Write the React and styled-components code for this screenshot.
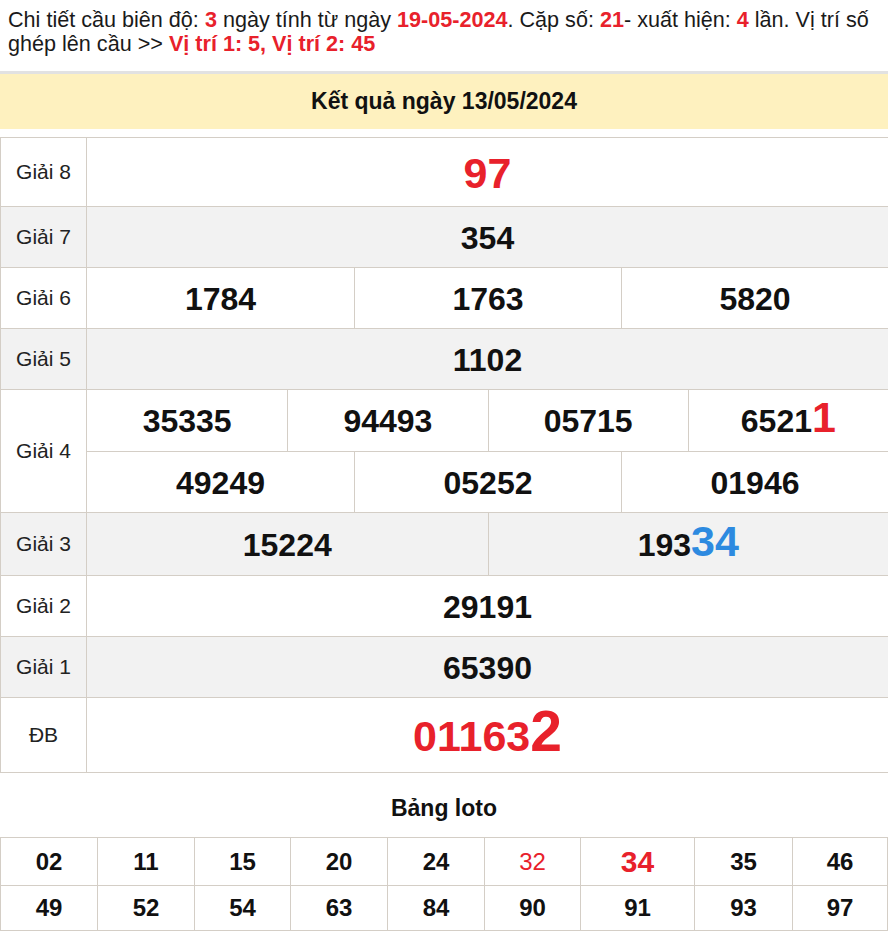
import styled, { createGlobalStyle } from "styled-components";

const GlobalStyle = createGlobalStyle`
  *, *::before, *::after {
    box-sizing: border-box;
  }
  html, body {
    margin: 0;
    padding: 0;
    background: #fff;
    font-family: "Liberation Sans", Arial, sans-serif;
    color: #111;
  }
`;

const RED = "#e8212b";
const BLUE = "#2d8ae0";
const LINE = "#d4cec6";

const prizes = [
  { label: "Giải 8", h: 69, rows: [[{ v: "97", red: true, big: true }]] },
  { label: "Giải 7", h: 61, alt: true, rows: [[{ v: "354" }]] },
  { label: "Giải 6", h: 61, rows: [[{ v: "1784" }, { v: "1763" }, { v: "5820" }]] },
  { label: "Giải 5", h: 61, alt: true, rows: [[{ v: "1102" }]] },
  {
    label: "Giải 4",
    h: 123,
    rows: [
      [{ v: "35335" }, { v: "94493" }, { v: "05715" }, { v: "6521", tail: "1", tailColor: RED }],
      [{ v: "49249" }, { v: "05252" }, { v: "01946" }],
    ],
  },
  { label: "Giải 3", h: 63, alt: true, rows: [[{ v: "15224" }, { v: "193", tail: "34", tailColor: BLUE }]] },
  { label: "Giải 2", h: 61, rows: [[{ v: "29191" }]] },
  { label: "Giải 1", h: 61, alt: true, rows: [[{ v: "65390" }]] },
  { label: "ĐB", h: 75, rows: [[{ v: "01163", red: true, big: true, tail: "2", tailColor: RED, tailHuge: true }]] },
];

const loto = [
  ["02", "11", "15", "20", "24", "32", "34", "35", "46"],
  ["49", "52", "54", "63", "84", "90", "91", "93", "97"],
];

export default function App() {
  return (
    <Page>
      <GlobalStyle />
      <Intro>
        Chi tiết cầu biên độ: <Hot>3</Hot> ngày tính từ ngày <Hot>19-05-2024</Hot>. Cặp số:{" "}
        <Hot>21</Hot>- xuất hiện: <Hot>4</Hot> lần. Vị trí số ghép lên cầu &gt;&gt;{" "}
        <Hot>Vị trí 1: 5, Vị trí 2: 45</Hot>
      </Intro>

      <Banner>Kết quả ngày 13/05/2024</Banner>

      <Results>
        {prizes.map((p) => (
          <PrizeRow key={p.label} $alt={p.alt} $h={p.h}>
            <Label>{p.label}</Label>
            <Values>
              {p.rows.map((row, i) => (
                <NumberLine key={i} $cols={row.length}>
                  {row.map((n, j) => (
                    <NumberCell key={j}>
                      <Digits $red={n.red} $big={n.big}>
                        {n.v}
                        {n.tail && (
                          <Tail $color={n.tailColor} $huge={n.tailHuge}>
                            {n.tail}
                          </Tail>
                        )}
                      </Digits>
                    </NumberCell>
                  ))}
                </NumberLine>
              ))}
            </Values>
          </PrizeRow>
        ))}
      </Results>

      <LotoTitle>Bảng loto</LotoTitle>

      <Loto>
        {loto.map((row, i) =>
          row.map((n, j) => (
            <LotoCell
              key={`${i}-${j}`}
              $h={i === 0 ? 48 : 45}
              $red={n === "32" || n === "34"}
              $big={n === "34"}
              $light={n === "32"}
            >
              {n}
            </LotoCell>
          ))
        )}
      </Loto>
    </Page>
  );
}

const Page = styled.div`
  width: 888px;
  overflow: hidden;
`;

const Intro = styled.p`
  margin: 0;
  height: 56px;
  padding: 8px 8px 0;
  font-size: 21.6px;
  line-height: 24px;
  color: #1a1a1a;
`;

const Hot = styled.b`
  color: ${RED};
`;

const Banner = styled.div`
  margin-top: 15px;
  border-top: 3px solid #e2e2e2;
  height: 58px;
  background: #fef1bf;
  display: flex;
  align-items: center;
  justify-content: center;
  font-size: 23px;
  font-weight: bold;
  color: #111;
`;

const Results = styled.div`
  margin-top: 8px;
  border-top: 1px solid ${LINE};
  border-left: 1px solid ${LINE};
`;

const PrizeRow = styled.div`
  display: grid;
  grid-template-columns: 86px 1fr;
  height: ${(p) => p.$h}px;
  background: ${(p) => (p.$alt ? "#f2f2f2" : "#fff")};
  border-bottom: 1px solid ${LINE};
`;

const Label = styled.div`
  display: flex;
  align-items: center;
  justify-content: center;
  border-right: 1px solid ${LINE};
  font-size: 21px;
  color: #222;
`;

const Values = styled.div`
  display: flex;
  flex-direction: column;

  & > * + * {
    border-top: 1px solid ${LINE};
  }
`;

const NumberLine = styled.div`
  flex: 1;
  display: grid;
  grid-template-columns: repeat(${(p) => p.$cols}, 1fr);

  & > * + * {
    border-left: 1px solid ${LINE};
  }
`;

const NumberCell = styled.div`
  display: flex;
  align-items: center;
  justify-content: center;
  padding-top: 2px;
`;

const Digits = styled.span`
  font-size: ${(p) => (p.$big ? "43px" : "32px")};
  font-weight: bold;
  line-height: 1;
  color: ${(p) => (p.$red ? RED : "#111")};
`;

const Tail = styled.span`
  font-size: ${(p) => (p.$huge ? "57px" : "43px")};
  line-height: 0;
  color: ${(p) => p.$color};
`;

const LotoTitle = styled.div`
  height: 64px;
  padding-top: 6px;
  display: flex;
  align-items: center;
  justify-content: center;
  font-size: 23px;
  font-weight: bold;
  color: #111;
`;

const Loto = styled.div`
  display: grid;
  grid-template-columns: 97px 97px 96px 97px 97px 96px 114px 98px 1fr;
  border-top: 1px solid ${LINE};
  border-left: 1px solid ${LINE};
`;

const LotoCell = styled.div`
  height: ${(p) => p.$h}px;
  display: flex;
  align-items: center;
  justify-content: center;
  border-right: 1px solid ${LINE};
  border-bottom: 1px solid ${LINE};
  font-size: ${(p) => (p.$big ? "30px" : "24px")};
  font-weight: ${(p) => (p.$light ? "normal" : "bold")};
  color: ${(p) => (p.$red ? RED : "#111")};
`;
